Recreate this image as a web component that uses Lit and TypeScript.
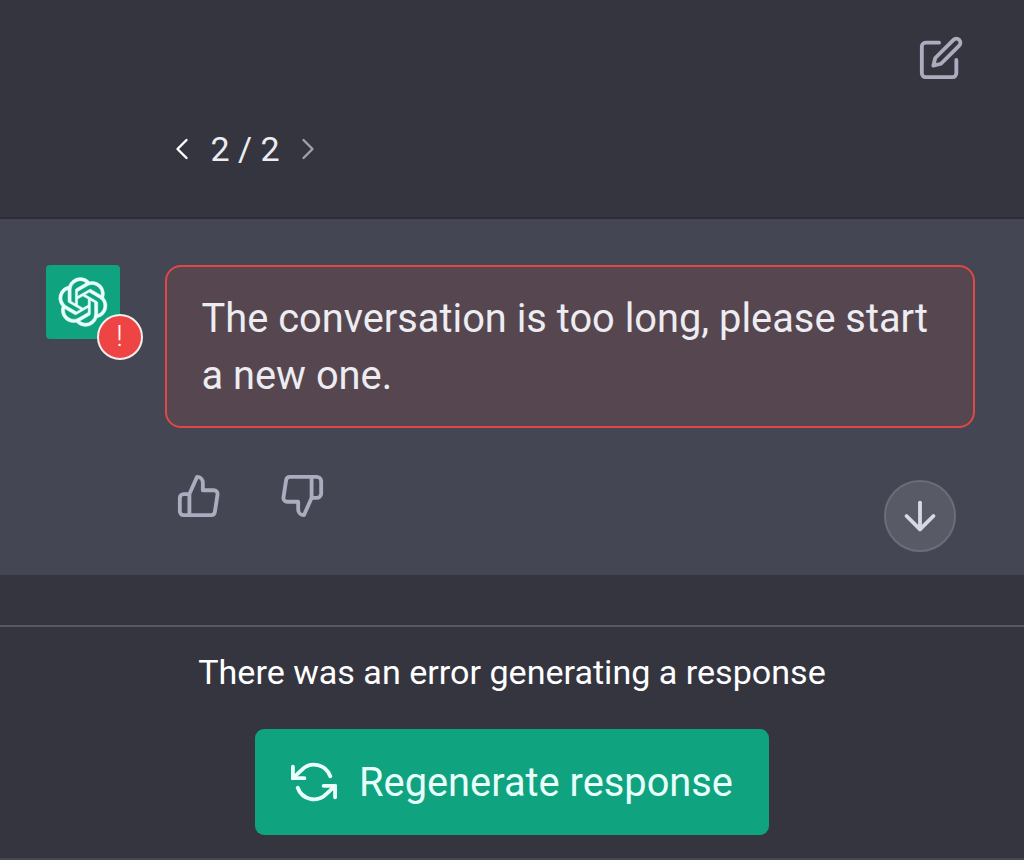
import { LitElement, html, css, svg } from 'lit';
import { customElement, property } from 'lit/decorators.js';

const icons = {
  edit: svg`
    <path d="M11 4H4a2 2 0 0 0-2 2v14a2 2 0 0 0 2 2h14a2 2 0 0 0 2-2v-7" />
    <path d="M18.5 2.5a2.121 2.121 0 0 1 3 3L12 15l-4 1 1-4 9.5-9.5z" />`,
  left: svg`<polyline points="15 18 9 12 15 6" />`,
  right: svg`<polyline points="9 18 15 12 9 6" />`,
  up: svg`<path d="M14 9V5a3 3 0 0 0-3-3l-4 9v11h11.28a2 2 0 0 0 2-1.7l1.38-9a2 2 0 0 0-2-2.3zM7 22H4a2 2 0 0 1-2-2v-7a2 2 0 0 1 2-2h3" />`,
  down: svg`<path d="M10 15v4a3 3 0 0 0 3 3l4-9V2H5.72a2 2 0 0 0-2 1.7l-1.38 9a2 2 0 0 0 2 2.3zm7-13h2.67A2.31 2.31 0 0 1 22 4v7a2.31 2.31 0 0 1-2.33 2H17" />`,
  arrow: svg`<path d="M12 5v14M19 12l-7 7-7-7" />`,
  refresh: svg`
    <polyline points="1 4 1 10 7 10" />
    <polyline points="23 20 23 14 17 14" />
    <path d="M20.49 9A9 9 0 0 0 5.64 5.64L1 10m22 4l-4.64 4.36A9 9 0 0 1 3.51 15" />`,
};

@customElement('line-icon')
class LineIcon extends LitElement {
  @property() name: keyof typeof icons = 'edit';

  static styles = css`
    :host {
      display: block;
      flex: none;
      width: 46px;
      height: 46px;
    }

    svg {
      display: block;
      width: 100%;
      height: 100%;
      overflow: visible;
      fill: none;
      stroke: currentColor;
      stroke-width: var(--stroke, 2);
      stroke-linecap: round;
      stroke-linejoin: round;
    }
  `;

  render() {
    return html`<svg viewBox="0 0 24 24">${icons[this.name]}</svg>`;
  }
}

@customElement('bot-avatar')
class BotAvatar extends LitElement {
  static styles = css`
    :host {
      display: block;
      flex: none;
    }

    .avatar {
      position: relative;
      display: flex;
      align-items: center;
      justify-content: center;
      width: 74px;
      height: 74px;
      border-radius: 4px;
      background: #10a37f;
      color: #e8fffb;
    }

    .logo {
      width: 50px;
      height: 50px;
      fill: currentColor;
      stroke: currentColor;
      stroke-width: 0.4;
    }

    .badge {
      position: absolute;
      right: -23px;
      bottom: -21px;
      display: flex;
      align-items: center;
      justify-content: center;
      box-sizing: border-box;
      width: 46px;
      height: 46px;
      border: 2px solid #f4eef0;
      border-radius: 50%;
      background: #ef4444;
      color: #fff;
      font-size: 29px;
      font-weight: 300;
      line-height: 1;
    }
  `;

  render() {
    return html`
      <div class="avatar">
        <svg class="logo" viewBox="0 0 41 41">
          <path d="M37.532 16.87a9.963 9.963 0 0 0-.856-8.184 10.078 10.078 0 0 0-10.855-4.835A9.964 9.964 0 0 0 18.306.5a10.079 10.079 0 0 0-9.614 6.977 9.967 9.967 0 0 0-6.664 4.834 10.08 10.08 0 0 0 1.24 11.817 9.965 9.965 0 0 0 .856 8.185 10.079 10.079 0 0 0 10.855 4.835 9.965 9.965 0 0 0 7.516 3.35 10.078 10.078 0 0 0 9.617-6.981 9.967 9.967 0 0 0 6.663-4.834 10.079 10.079 0 0 0-1.243-11.813zM22.498 37.886a7.474 7.474 0 0 1-4.799-1.735c.061-.033.168-.091.237-.134l7.964-4.6a1.294 1.294 0 0 0 .655-1.134V19.054l3.366 1.944a.12.12 0 0 1 .066.092v9.299a7.505 7.505 0 0 1-7.49 7.496zM6.392 31.006a7.471 7.471 0 0 1-.894-5.023c.06.036.162.099.237.141l7.964 4.6a1.297 1.297 0 0 0 1.308 0l9.724-5.614v3.888a.12.12 0 0 1-.048.103l-8.051 4.649a7.504 7.504 0 0 1-10.24-2.744zM4.297 13.62A7.469 7.469 0 0 1 8.2 10.333c0 .068-.004.19-.004.274v9.201a1.294 1.294 0 0 0 .654 1.132l9.723 5.614-3.366 1.944a.12.12 0 0 1-.114.01L7.04 23.856a7.504 7.504 0 0 1-2.743-10.237zm27.658 6.437l-9.724-5.615 3.367-1.943a.121.121 0 0 1 .113-.01l8.052 4.648a7.498 7.498 0 0 1-1.158 13.528v-9.476a1.293 1.293 0 0 0-.65-1.132zm3.35-5.043c-.059-.037-.162-.099-.236-.141l-7.965-4.6a1.298 1.298 0 0 0-1.308 0l-9.723 5.614v-3.888a.12.12 0 0 1 .048-.103l8.05-4.645a7.497 7.497 0 0 1 11.135 7.763zm-21.063 6.929l-3.367-1.944a.12.12 0 0 1-.065-.092v-9.299a7.497 7.497 0 0 1 12.293-5.756 6.94 6.94 0 0 0-.236.134l-7.965 4.6a1.294 1.294 0 0 0-.654 1.132l-.006 11.225zm1.829-3.943l4.33-2.501 4.332 2.5v5l-4.331 2.5-4.331-2.5V18z" />
        </svg>
        <span class="badge">!</span>
      </div>
    `;
  }
}

@customElement('app-root')
class AppRoot extends LitElement {
  static styles = css`
    :host {
      display: flex;
      flex-direction: column;
      box-sizing: border-box;
      height: 860px;
      overflow: hidden;
      border-bottom: 2px solid #474754;
      background: #353540;
      color: #ececf1;
      font-family: Roboto, sans-serif;
    }

    button {
      padding: 0;
      border: none;
      background: none;
      color: inherit;
      font: inherit;
      cursor: pointer;
    }

    .user-turn {
      display: flex;
      flex-direction: column;
      box-sizing: border-box;
      height: 219px;
      padding: 35px 60px 0 164px;
      border-bottom: 2px solid #2b2c35;
    }

    .edit {
      align-self: flex-end;
      color: #acacbe;
    }

    .pager {
      display: flex;
      align-items: center;
      height: 36px;
      margin-top: 50px;
      font-size: 34px;
    }

    .pager line-icon {
      width: 36px;
      height: 36px;
      --stroke: 1.6;
    }

    .pager .prev {
      color: #fff;
    }

    .pager .next {
      color: #a0a0ab;
    }

    .count {
      width: 90px;
      text-align: center;
      white-space: nowrap;
    }

    .bot-turn {
      position: relative;
      box-sizing: border-box;
      height: 356px;
      padding: 45.5px 49.5px 0 45.5px;
      background: #444654;
    }

    .message {
      display: flex;
      gap: 45.5px;
    }

    .error {
      flex: 1;
      box-sizing: border-box;
      height: 163px;
      padding: 23px 34.5px;
      border: 2px solid #e04848;
      border-radius: 16px;
      background: #564650;
      font-size: 39.8px;
      line-height: 57px;
    }

    .votes {
      display: flex;
      gap: 56.5px;
      padding: 45.5px 0 0 130.5px;
      color: #acacbe;
    }

    .scroll {
      position: absolute;
      right: 68px;
      bottom: 23px;
      display: flex;
      align-items: center;
      justify-content: center;
      box-sizing: border-box;
      width: 72px;
      height: 72px;
      border: 2px solid #6b6d78;
      border-radius: 50%;
      background: #585a65;
      color: #d9d9e3;
    }

    .footer {
      display: flex;
      flex-direction: column;
      align-items: center;
      margin-top: 50px;
      border-top: 2px solid #585863;
    }

    .notice {
      margin-top: 25px;
      color: #fff;
      font-size: 34.1px;
      line-height: 40px;
    }

    .regenerate {
      display: flex;
      align-items: center;
      justify-content: center;
      gap: 22px;
      width: 514px;
      height: 106px;
      margin-top: 37px;
      border-radius: 9px;
      background: #10a37f;
      color: #e8fffb;
      font-size: 39.8px;
      white-space: nowrap;
    }
  `;

  render() {
    return html`
      <div class="user-turn">
        <button class="edit"><line-icon name="edit"></line-icon></button>
        <div class="pager">
          <button class="prev"><line-icon name="left"></line-icon></button>
          <span class="count">2 / 2</span>
          <button class="next"><line-icon name="right"></line-icon></button>
        </div>
      </div>
      <div class="bot-turn">
        <div class="message">
          <bot-avatar></bot-avatar>
          <div class="error">The conversation is too long, please start a new one.</div>
        </div>
        <div class="votes">
          <button><line-icon name="up"></line-icon></button>
          <button><line-icon name="down"></line-icon></button>
        </div>
        <button class="scroll"><line-icon name="arrow"></line-icon></button>
      </div>
      <div class="footer">
        <div class="notice">There was an error generating a response</div>
        <button class="regenerate">
          <line-icon name="refresh"></line-icon>
          <span>Regenerate response</span>
        </button>
      </div>
    `;
  }
}
